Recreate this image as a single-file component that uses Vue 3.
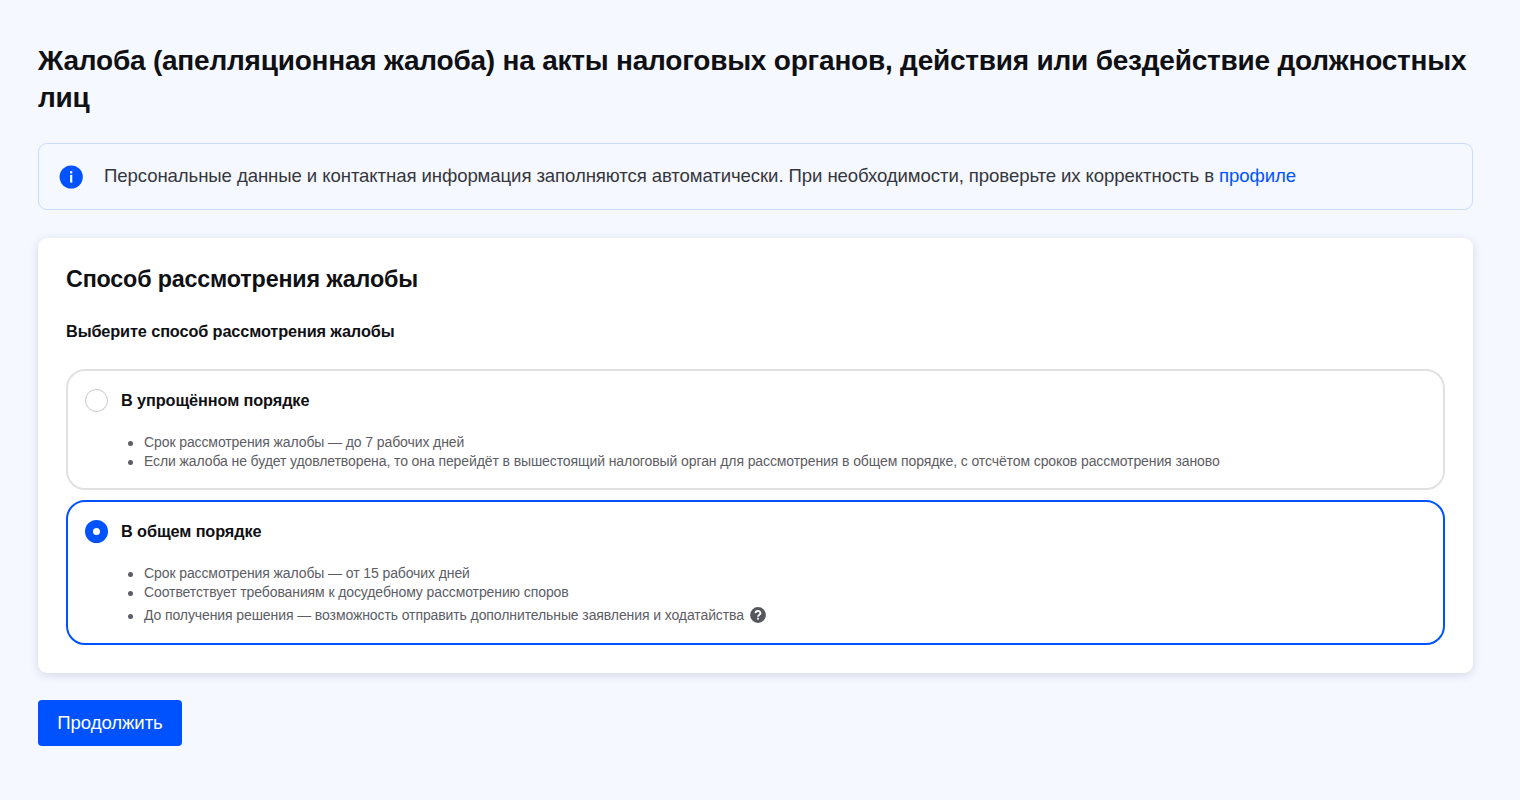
<template>
  <div class="page">
    <h1>Жалоба (апелляционная жалоба) на акты налоговых органов, действия или бездействие должностных лиц</h1>

    <div class="notice">
      <svg class="notice-icon" viewBox="0 0 24 24" width="24" height="24">
        <circle cx="12.2" cy="12" r="11.6" fill="#0052ff" />
        <rect x="11.1" y="6.2" width="2.2" height="2.2" fill="#fff" />
        <rect x="11.1" y="9.8" width="2.2" height="7.8" fill="#fff" />
      </svg>
      <p>
        Персональные данные и контактная информация заполняются автоматически. При необходимости, проверьте их корректность в
        <a href="#" @click.prevent>профиле</a>
      </p>
    </div>

    <div class="card">
      <h2>Способ рассмотрения жалобы</h2>
      <h3>Выберите способ рассмотрения жалобы</h3>

      <div
        v-for="option in options"
        :key="option.id"
        :class="['option', { 'selected': selected === option.id }]"
        @click="selected = option.id"
      >
        <div class="option-title">
          <span class="radio"></span>
          <b>{{ option.title }}</b>
        </div>
        <ul>
          <li v-for="item in option.items" :key="item.text" :class="{ 'with-hint': item.hint }">
            <span>{{ item.text }}</span>
            <svg v-if="item.hint" class="hint" viewBox="0 0 16 16" width="16" height="16">
              <circle cx="8" cy="8" r="7.9" fill="#55565e" />
              <path d="M5.6 6.2a2.4 2.1 0 1 1 3.7 1.6c-.8.6-1.3.9-1.3 1.9" fill="none" stroke="#fff" stroke-width="1.8" />
              <rect x="7.1" y="10.8" width="1.8" height="1.8" fill="#fff" />
            </svg>
          </li>
        </ul>
      </div>
    </div>

    <button class="btn">Продолжить</button>
  </div>
</template>

<script setup>
import { ref } from 'vue';

const selected = ref('general');

const options = [
  {
    id: 'simple',
    title: 'В упрощённом порядке',
    items: [
      { text: 'Срок рассмотрения жалобы — до 7 рабочих дней' },
      { text: 'Если жалоба не будет удовлетворена, то она перейдёт в вышестоящий налоговый орган для рассмотрения в общем порядке, с отсчётом сроков рассмотрения заново' },
    ],
  },
  {
    id: 'general',
    title: 'В общем порядке',
    items: [
      { text: 'Срок рассмотрения жалобы — от 15 рабочих дней' },
      { text: 'Соответствует требованиям к досудебному рассмотрению споров' },
      { text: 'До получения решения — возможность отправить дополнительные заявления и ходатайства', hint: true },
    ],
  },
];
</script>

<style>
body {
  background: #f5f8ff;
}
</style>

<style scoped>
* {
  margin: 0;
  padding: 0;
  box-sizing: border-box;
}
.page {
  min-height: 800px;
  padding: 42px 47px 0 38px;
  font-family: "Liberation Sans", Arial, sans-serif;
  color: #0f1014;
}
h1 {
  font-size: 28px;
  line-height: 37px;
  letter-spacing: -0.215px;
}
.notice {
  display: flex;
  align-items: center;
  height: 67px;
  margin-top: 27px;
  padding-left: 20px;
  border: 1px solid #c9dbff;
  border-radius: 9px;
}
.notice p {
  margin: 0 0 2px 21px;
  font-size: 18.6px;
  letter-spacing: -0.096px;
  color: #36373d;
  white-space: nowrap;
}
.notice a {
  color: #0052ff;
  text-decoration: none;
}
.card {
  height: 435px;
  margin-top: 28px;
  padding: 27px 28px 28px;
  background: #fff;
  border-radius: 9px;
  box-shadow: 0 2px 10px rgba(30, 35, 55, 0.15);
}
h2 {
  font-size: 23.3px;
  line-height: 28px;
  letter-spacing: -0.17px;
}
h3 {
  margin: 28px 0 27px;
  font-size: 16.3px;
  line-height: 21px;
  letter-spacing: -0.12px;
}
.option {
  height: 121px;
  padding: 17px 17px 0;
  border: 2px solid #e1e1e3;
  border-radius: 19px;
  cursor: pointer;
}
.option + .option {
  height: 145px;
  margin-top: 10px;
}
.option.selected {
  border-color: #0052ff;
}
.option-title {
  display: flex;
  align-items: center;
  height: 24px;
  font-size: 16.3px;
  letter-spacing: -0.1px;
}
.radio {
  width: 23px;
  height: 23px;
  margin-right: 13px;
  border: 1px solid #c8c8cc;
  border-radius: 50%;
}
.selected .radio {
  border: 8px solid #0052ff;
}
ul {
  margin-top: 21px;
  padding-left: 59px;
  font-size: 14px;
  line-height: 18.6px;
  letter-spacing: -0.1px;
  color: #5c5d65;
  list-style: none;
}
li {
  position: relative;
}
li::before {
  content: "";
  position: absolute;
  top: calc(50% - 1px);
  left: -16.5px;
  width: 5px;
  height: 5px;
  border-radius: 50%;
  background: #5c5d65;
}
li span {
  white-space: nowrap;
}
.with-hint {
  line-height: 28px;
}
.hint {
  margin-left: 6.5px;
  vertical-align: -3px;
}
.btn {
  display: block;
  width: 144px;
  height: 46px;
  margin-top: 27px;
  padding-bottom: 1px;
  border: none;
  border-radius: 4px;
  background: #0052ff;
  color: #fff;
  font-family: inherit;
  font-size: 18.6px;
  letter-spacing: -0.1px;
  cursor: pointer;
}
</style>
